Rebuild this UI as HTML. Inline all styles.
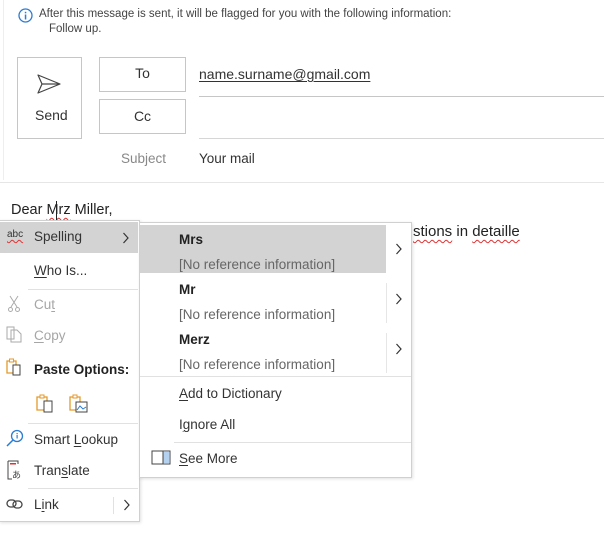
<!DOCTYPE html>
<html><head><meta charset="utf-8"><style>
*{margin:0;padding:0;box-sizing:border-box}
body{width:604px;height:546px;background:#fff;font-family:"Segoe UI","Liberation Sans",sans-serif;color:#333;position:relative;overflow:hidden;font-size:13px}
.a{position:absolute;white-space:nowrap}
.box{position:absolute;border:1px solid #c6c6c6;background:#fff}
.hl{position:absolute;background:#d3d3d3}
.sep{position:absolute;height:1px;background:#e1e1e1}
.wavy{text-decoration:underline wavy #d33;text-decoration-thickness:1px;text-underline-offset:3px}
u{text-decoration:underline;text-underline-offset:2px}
.dis{color:#a6a6a6}
</style></head><body>
<div class="a" style="left:3px;top:0;width:1px;height:180px;background:#eee"></div>
<svg class="a" style="left:18px;top:8px" width="15" height="15"><circle cx="7.5" cy="7.5" r="6.5" fill="none" stroke="#2b7cd3" stroke-width="1.3"/><rect x="6.8" y="6.5" width="1.5" height="5" fill="#2b7cd3"/><rect x="6.8" y="3.8" width="1.5" height="1.5" fill="#2b7cd3"/></svg>
<div class="a" style="left:39px;top:8px;font-size:11.5px;color:#444">After this message is sent, it will be flagged for you with the following information:</div>
<div class="a" style="left:49px;top:23px;font-size:11.5px;color:#444">Follow up.</div>
<div class="box" style="left:17px;top:57px;width:65px;height:82px"></div>
<svg class="a" style="left:36px;top:73px" width="26" height="22"><path d="M2 2 L24 11 L2 20 L6 11 Z M6 11 H24" fill="none" stroke="#444" stroke-width="1.2" stroke-linejoin="round"/></svg>
<div class="a" style="left:35px;top:107px;font-size:14px">Send</div>
<div class="box" style="left:99px;top:57px;width:87px;height:35px"></div>
<div class="a" style="left:99px;top:65px;width:87px;text-align:center;font-size:14px">To</div>
<div class="box" style="left:99px;top:99px;width:87px;height:35px"></div>
<div class="a" style="left:99px;top:108px;width:87px;text-align:center;font-size:14px">Cc</div>
<div class="a" style="left:199px;top:66px;font-size:14px"><u>name.surname@gmail.com</u></div>
<div class="a" style="left:199px;top:96px;width:405px;height:1px;background:#c6c6c6"></div>
<div class="a" style="left:199px;top:138px;width:405px;height:1px;background:#d6d6d6"></div>
<div class="a" style="left:121px;top:151px;font-size:13.5px;color:#888">Subject</div>
<div class="a" style="left:199px;top:151px;font-size:13.5px">Your mail</div>
<div class="a" style="left:0;top:182px;width:604px;height:1px;background:#e6e6e6"></div>
<div class="a" style="left:11px;top:202px;font-size:14.5px;color:#222">Dear <span class="wavy">Mrz</span> Miller,</div>
<div class="a" style="left:56px;top:201px;width:1px;height:19px;background:#222"></div>
<div class="a" style="left:413px;top:223px;font-size:15px;color:#222"><span class="wavy">stions</span> in <span class="wavy">detaille</span></div>

<!-- main menu -->
<div class="box" style="left:-1px;top:220px;width:141px;height:302px;border-color:#d0d0d0;box-shadow:1px 1px 3px rgba(0,0,0,.12)"></div>
<div class="hl" style="left:0;top:222px;width:138px;height:31px"></div>
<div class="a" style="left:7px;top:229px;font-size:10px;color:#333"><span class="wavy" style="text-underline-offset:2px">abc</span></div>
<div class="a" style="left:34px;top:229px;font-size:13.5px">Spelling</div>
<svg class="a" style="left:122px;top:232px" width="8" height="12"><path d="M1.5 1 L6 6 L1.5 11" fill="none" stroke="#333" stroke-width="1.2"/></svg>
<div class="a" style="left:34px;top:263px;font-size:13.5px"><u>W</u>ho Is...</div>
<div class="sep" style="left:28px;top:289px;width:110px"></div>
<svg class="a" style="left:7px;top:295px" width="14" height="18"><path d="M3 1 L10 12 M11 1 L4 12" stroke="#aaa" fill="none"/><circle cx="3.5" cy="14.5" r="2" fill="none" stroke="#aaa"/><circle cx="10.5" cy="14.5" r="2" fill="none" stroke="#aaa"/></svg>
<div class="a dis" style="left:34px;top:297px;font-size:13.5px">Cu<u>t</u></div>
<svg class="a" style="left:6px;top:326px" width="16" height="17"><path d="M1 1 H8 V13 H1 Z M5 4 H11 L15 8 V16 H5 Z" fill="#fff" stroke="#aaa"/></svg>
<div class="a dis" style="left:34px;top:328px;font-size:13.5px"><u>C</u>opy</div>
<svg class="a" style="left:6px;top:358px" width="16" height="18"><path d="M1 3 H10 V15 H1 Z" fill="none" stroke="#e59a29" stroke-width="1.3"/><rect x="3.5" y="1" width="4" height="3" fill="#fff" stroke="#e59a29"/><rect x="7" y="7" width="7" height="10" fill="#fff" stroke="#444"/></svg>
<div class="a" style="left:34px;top:362px;font-size:13.5px;font-weight:bold;color:#222">Paste Options:</div>
<svg class="a" style="left:36px;top:393px" width="18" height="20"><path d="M1 4 H11 V17 H1 Z" fill="none" stroke="#e59a29" stroke-width="1.3"/><rect x="4" y="2" width="4" height="3" fill="#fff" stroke="#e59a29"/><rect x="8" y="8" width="8" height="11" fill="#fff" stroke="#444"/></svg>
<svg class="a" style="left:69px;top:393px" width="20" height="20"><path d="M1 4 H11 V17 H1 Z" fill="none" stroke="#e59a29" stroke-width="1.3"/><rect x="4" y="2" width="4" height="3" fill="#fff" stroke="#e59a29"/><rect x="7" y="9" width="11" height="10" fill="#fff" stroke="#444"/><path d="M8 17 L11 13 L14 16 L17 14" stroke="#2b7cd3" fill="none"/></svg>
<div class="sep" style="left:28px;top:423px;width:110px"></div>
<svg class="a" style="left:6px;top:429px" width="18" height="18"><circle cx="11" cy="7" r="5.5" fill="none" stroke="#2b7cd3" stroke-width="1.3"/><path d="M7 11 L1 17" stroke="#2b7cd3" stroke-width="1.5"/><rect x="10.5" y="6" width="1.2" height="3.5" fill="#2b7cd3"/><rect x="10.5" y="4" width="1.2" height="1.2" fill="#2b7cd3"/></svg>
<div class="a" style="left:34px;top:432px;font-size:13.5px">Smart <u>L</u>ookup</div>
<svg class="a" style="left:7px;top:460px" width="16" height="20"><path d="M1 1 H11 V4 M1 1 V19 H5" fill="none" stroke="#444"/><rect x="3" y="3" width="6" height="1.5" fill="#d33"/><text x="5" y="18" font-size="9" fill="#444" font-family="Noto Sans CJK JP">あ</text></svg>
<div class="a" style="left:34px;top:463px;font-size:13.5px">Tran<u>s</u>late</div>
<div class="sep" style="left:28px;top:488px;width:110px"></div>
<svg class="a" style="left:6px;top:498px" width="18" height="12"><rect x="1" y="2" width="9" height="7" rx="3.5" fill="none" stroke="#444" stroke-width="1.3"/><rect x="7" y="3" width="9" height="7" rx="3.5" fill="none" stroke="#444" stroke-width="1.3"/></svg>
<div class="a" style="left:34px;top:497px;font-size:13.5px">L<u>i</u>nk</div>
<div class="a" style="left:113px;top:497px;width:1px;height:17px;background:#e1e1e1"></div>
<svg class="a" style="left:123px;top:499px" width="8" height="12"><path d="M1.5 1 L6 6 L1.5 11" fill="none" stroke="#333" stroke-width="1.2"/></svg>

<!-- submenu -->
<div class="box" style="left:139px;top:222px;width:273px;height:256px;border-color:#d0d0d0;box-shadow:1px 1px 3px rgba(0,0,0,.12)"></div>
<div class="hl" style="left:140px;top:225px;width:246px;height:48px"></div>
<div class="a" style="left:179px;top:232px;font-size:13.5px;font-weight:bold;color:#222">Mrs</div>
<div class="a" style="left:179px;top:257px;font-size:13.5px;color:#666">[No reference information]</div>
<svg class="a" style="left:395px;top:243px" width="8" height="12"><path d="M1.5 1 L6 6 L1.5 11" fill="none" stroke="#333" stroke-width="1.2"/></svg>
<div class="a" style="left:179px;top:282px;font-size:13.5px;font-weight:bold;color:#222">Mr</div>
<div class="a" style="left:179px;top:307px;font-size:13.5px;color:#666">[No reference information]</div>
<div class="a" style="left:386px;top:283px;width:1px;height:40px;background:#e6e6e6"></div>
<svg class="a" style="left:395px;top:293px" width="8" height="12"><path d="M1.5 1 L6 6 L1.5 11" fill="none" stroke="#333" stroke-width="1.2"/></svg>
<div class="a" style="left:179px;top:332px;font-size:13.5px;font-weight:bold;color:#222">Merz</div>
<div class="a" style="left:179px;top:357px;font-size:13.5px;color:#666">[No reference information]</div>
<div class="a" style="left:386px;top:333px;width:1px;height:40px;background:#e6e6e6"></div>
<svg class="a" style="left:395px;top:343px" width="8" height="12"><path d="M1.5 1 L6 6 L1.5 11" fill="none" stroke="#333" stroke-width="1.2"/></svg>
<div class="sep" style="left:140px;top:376px;width:271px"></div>
<div class="a" style="left:179px;top:386px;font-size:13.5px"><u>A</u>dd to Dictionary</div>
<div class="a" style="left:179px;top:417px;font-size:13.5px">I<u>g</u>nore All</div>
<div class="sep" style="left:174px;top:442px;width:237px"></div>
<svg class="a" style="left:151px;top:450px" width="20" height="16"><rect x="1" y="1" width="18" height="13" fill="#fff" stroke="#444"/><rect x="12" y="2" width="6" height="11" fill="#2b7cd3" opacity=".35"/><path d="M12 1 V14" stroke="#444"/></svg>
<div class="a" style="left:179px;top:451px;font-size:13.5px"><u>S</u>ee More</div>
</body></html>
